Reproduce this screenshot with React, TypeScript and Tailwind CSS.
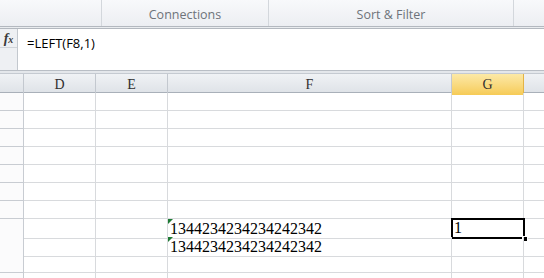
const cols = ["D", "E", "F", "G"];
const grid = "grid grid-cols-[24px_72px_72px_284px_72px_1fr]";
const value = "1344234234234242342";

function Cell({ children, tri }: { children?: React.ReactNode; tri?: boolean }) {
  return (
    <div className="relative h-full border-r border-b border-[#d8dadd] pl-[2px] overflow-visible whitespace-nowrap text-[16px] leading-[19px] text-black font-['Liberation_Serif',serif]">
      {tri && (
        <span className="absolute left-0 top-0 h-0 w-0 border-t-[5px] border-r-[5px] border-t-[#1e7a34] border-r-transparent" />
      )}
      {children}
    </div>
  );
}

export default function App() {
  const rows = Array.from({ length: 11 }, (_, i) => i);
  return (
    <div className="w-[544px] h-[278px] overflow-hidden bg-white font-['Open_Sans','Liberation_Sans',sans-serif]">
      {/* ribbon group labels */}
      <div className="flex h-[26px] bg-gradient-to-b from-[#f8f9fb] to-[#eceef2] text-[12.5px] text-[#6e737a]">
        <div className="w-[102px] border-r border-[#d3d7dc]" />
        <div className="w-[167px] border-r border-[#d3d7dc] flex items-end justify-center pb-[1px]">Connections</div>
        <div className="w-[245px] border-r border-[#d3d7dc] flex items-end justify-center pb-[1px]">Sort &amp; Filter</div>
        <div className="flex-1" />
      </div>
      <div className="h-[3px] border-t border-b border-[#b3b8bf] bg-[#e9ecef]" />

      {/* formula bar */}
      <div className="flex h-[42px] border-b border-[#b9bec5]">
        <div className="w-[18px] bg-[#eef0f3] border-r border-[#c3c8ce] flex flex-col">
          <div className="h-[19px] border-b border-[#d0d4d9] text-center text-[14px] italic font-bold font-['Liberation_Serif',serif] text-[#3a3a3a] leading-[19px]">
            f<span className="text-[10px]">x</span>
          </div>
        </div>
        <div className="flex-1 bg-white pl-[9px] pt-[4px] text-[13px] leading-[20px] text-black">=LEFT(F8,1)</div>
      </div>
      <div className="h-[3px] bg-[#e4e7eb] border-b border-[#c5cad1]" />

      {/* column headers */}
      <div className={`${grid} h-[19px] bg-gradient-to-b from-[#f0f2f5] to-[#dfe3e8] border-b border-[#a9b0b9]`}>
        <div className="border-r border-[#c3c8cf]" />
        {cols.map((c) => (
          <div
            key={c}
            className={`flex items-center justify-center border-r text-[14px] font-['Liberation_Serif',serif] text-[#2f2f2f] ${
              c === "G"
                ? "bg-gradient-to-b from-[#fce9a6] to-[#f6cb55] border-[#e3b346]"
                : "border-[#c3c8cf]"
            }`}
          >
            {c}
          </div>
        ))}
        <div />
      </div>

      {/* rows */}
      {rows.map((r) => (
        <div key={r} className={`${grid} h-[18px]`}>
          <div className="h-full border-r border-b border-[#c8ccd2] bg-[#fbfbfc]" />
          <Cell />
          <Cell />
          <Cell tri={r === 7 || r === 8}>{r === 7 || r === 8 ? value : null}</Cell>
          {r === 7 ? (
            <div className="relative h-full border-b border-[#d8dadd]">
              <div className="absolute -left-[1px] -top-[1px] -right-[1px] -bottom-[1px] border-2 border-black pl-[1px] text-[16px] leading-[16px] font-['Liberation_Serif',serif]">
                1
              </div>
              <div className="absolute -right-[4px] -bottom-[4px] h-[6px] w-[6px] bg-black border border-white" />
            </div>
          ) : (
            <Cell />
          )}
          <div className="h-full border-b border-[#d8dadd]" />
        </div>
      ))}
    </div>
  );
}
